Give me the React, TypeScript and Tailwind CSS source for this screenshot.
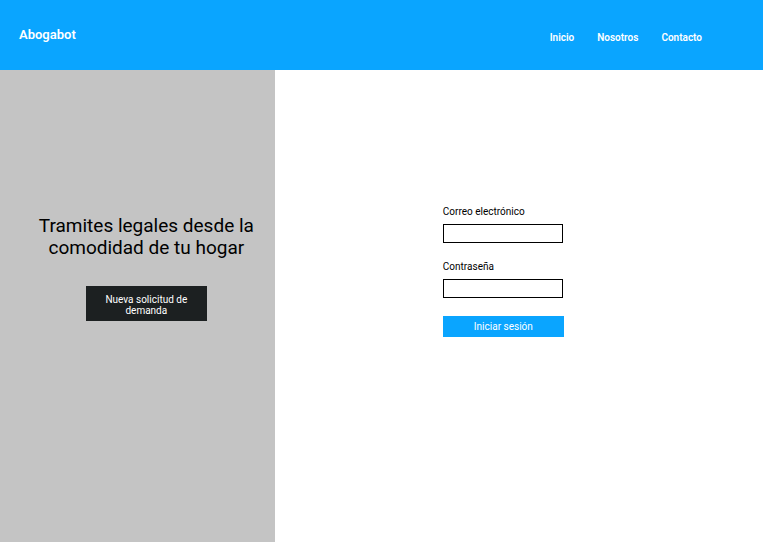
export default function App() {
  return (
    <div className="flex min-h-screen flex-col bg-white font-['Roboto',sans-serif] text-black">
      <header className="flex h-[70px] items-center justify-between bg-[#0aa5ff] pr-[61px] pl-[19px] font-semibold text-white">
        <a href="#" className="text-[13px]">Abogabot</a>
        <nav className="flex gap-[23px] pt-1 text-[10px]">
          <a href="#inicio">Inicio</a>
          <a href="#nosotros">Nosotros</a>
          <a href="#contacto">Contacto</a>
        </nav>
      </header>
      <main className="flex flex-1">
        <section className="flex w-[36%] flex-col items-center bg-[#c4c4c4] pt-[145px] pl-[18px]">
          <h1 className="text-center text-[19px] leading-[22px]">
            Tramites legales desde la
            <br />
            comodidad de tu hogar
          </h1>
          <button type="button" className="mt-[27px] h-[35px] w-[121px] bg-[#1c2021] px-4 pt-[2px] text-[10px] leading-[11px] text-white">
            Nueva solicitud de demanda
          </button>
        </section>
        <section className="flex flex-1 justify-center pt-[136px] pr-[31px]">
          <form className="flex w-[121px] flex-col text-[10px] leading-3">
            <label htmlFor="email">Correo electrónico</label>
            <input id="email" type="email" className="mt-[6px] h-[19px] w-[120px] border border-black px-1" />
            <label htmlFor="password" className="mt-[18px]">Contraseña</label>
            <input id="password" type="password" className="mt-[6px] h-[19px] w-[120px] border border-black px-1" />
            <button type="submit" className="mt-[18px] h-[21px] w-[121px] bg-[#0aa5ff] text-white">
              Iniciar sesión
            </button>
          </form>
        </section>
      </main>
    </div>
  );
}
